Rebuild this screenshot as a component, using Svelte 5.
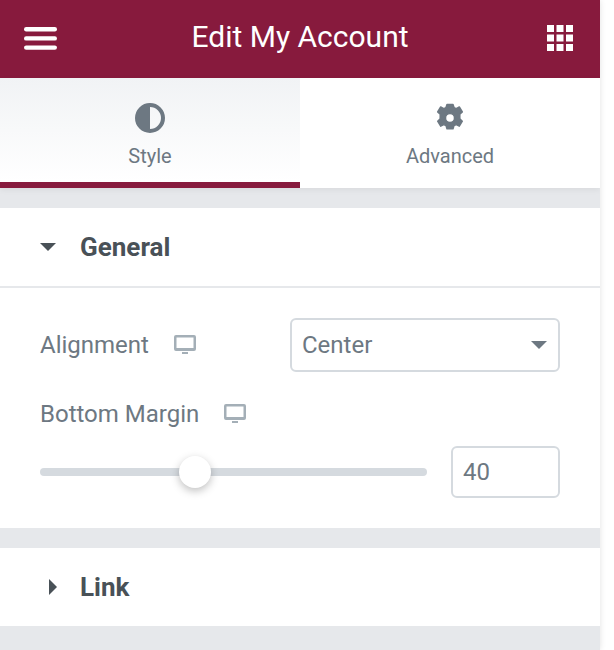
<script>
  const tabs = [
    { id: 'style', label: 'Style' },
    { id: 'advanced', label: 'Advanced' }
  ];
  let active = 'style';
</script>

<div class="panel">
  <header class="topbar">
    <svg class="burger" viewBox="0 0 33 23" width="33" height="23" aria-hidden="true">
      <rect x="0" y="0" width="33" height="4.4" rx="2.2" />
      <rect x="0" y="9.2" width="33" height="4.4" rx="2.2" />
      <rect x="0" y="18.4" width="33" height="4.4" rx="2.2" />
    </svg>
    <h1>Edit My Account</h1>
    <svg class="grid" viewBox="0 0 26 26" width="26" height="26" aria-hidden="true">
      {#each [0, 9.5, 19] as y}
        {#each [0, 9.5, 19] as x}
          <rect {x} {y} width="7" height="7" />
        {/each}
      {/each}
    </svg>
  </header>

  <nav class="tabs">
    {#each tabs as tab}
      <div class="tab" class:active={active === tab.id}>
        {#if tab.id === 'style'}
          <svg viewBox="0 0 30 30" width="30" height="30" aria-hidden="true">
            <path fill-rule="evenodd" d="M15 0a15 15 0 1 0 0 30a15 15 0 0 0 0-30zM15 4a11 11 0 0 1 0 22z" />
          </svg>
        {:else}
          <svg class="gear" viewBox="0 0 30 30" width="30" height="30" aria-hidden="true">
            <path fill-rule="evenodd" d="M12 1.500h6l1 3.100 2.300 1 3-1.600 3 5-2.500 2.300v3.400v1.200l2.500 2.300-3 5-3-1.600-2.300 1-1 3.100h-6l-1-3.100-2.300-1-3 1.600-3-5 2.500-2.300v-4.600l-2.500-2.300 3-5 3 1.600 2.300-1zM15 10.500a4.500 4.500 0 1 0 0 9a4.500 4.500 0 0 0 0-9z" />
          </svg>
        {/if}
        <span>{tab.label}</span>
      </div>
    {/each}
  </nav>

  <section class="section first">
    <div class="section-head open">
      <span class="caret-down"></span>
      <h2>General</h2>
    </div>
    <div class="section-body">
      <div class="row">
        <div class="label">
          <span>Alignment</span>
          <svg class="device" viewBox="0 0 22 20" width="22" height="20" aria-hidden="true">
            <path fill-rule="evenodd" d="M2 0h18a2 2 0 0 1 2 2v12a2 2 0 0 1-2 2h-18a2 2 0 0 1-2-2v-12a2 2 0 0 1 2-2zM2.500 2.500v10.500h17v-10.500zM8 17h6v2h-6z" />
          </svg>
        </div>
        <div class="select">
          <span>Center</span>
          <span class="select-caret"></span>
        </div>
      </div>
      <div class="label margin-label">
        <span>Bottom Margin</span>
        <svg class="device" viewBox="0 0 22 20" width="22" height="20" aria-hidden="true">
          <path fill-rule="evenodd" d="M2 0h18a2 2 0 0 1 2 2v12a2 2 0 0 1-2 2h-18a2 2 0 0 1-2-2v-12a2 2 0 0 1 2-2zM2.500 2.500v10.500h17v-10.500zM8 17h6v2h-6z" />
        </svg>
      </div>
      <div class="slider-row">
        <div class="track">
          <div class="thumb"></div>
        </div>
        <div class="number">40</div>
      </div>
    </div>
  </section>

  <section class="section">
    <div class="section-head closed">
      <span class="caret-right"></span>
      <h2>Link</h2>
    </div>
  </section>
</div>

<style>
  :global(body) {
    background: #fff;
  }

  .panel {
    width: 600px;
    height: 650px;
    background: #e6e8eb;
    font-family: Roboto, "Liberation Sans", sans-serif;
    box-shadow: 0 0 6px rgba(0, 0, 0, 0.12);
    overflow: hidden;
  }

  .topbar {
    height: 78px;
    background: #871a3d;
    display: flex;
    align-items: center;
    justify-content: space-between;
    padding: 0 27px 0 24px;
    color: #fff;
  }

  .topbar h1 {
    margin: 0;
    font-size: 30px;
    font-weight: 400;
    line-height: 1;
    position: relative;
    top: -2px;
    left: -2px;
  }

  .burger {
    fill: #fff;
    margin-bottom: 2px;
  }

  .grid {
    fill: #fff;
    margin-bottom: 2px;
  }

  .tabs {
    display: flex;
    height: 110px;
    box-shadow: 0 2px 6px rgba(0, 0, 0, 0.06);
    position: relative;
  }

  .tab {
    flex: 1;
    display: flex;
    flex-direction: column;
    align-items: center;
    padding-top: 25px;
    background: #fff;
    color: #6d7882;
    box-sizing: border-box;
  }

  .tab svg {
    fill: #6d7882;
    display: block;
  }

  .tab svg.gear {
    stroke: #6d7882;
    stroke-width: 1.500;
    stroke-linejoin: round;
  }

  .tab span {
    font-size: 20px;
    line-height: 24px;
    margin-top: 11px;
  }

  .tab.active {
    background: linear-gradient(180deg, #f1f3f5, #fff);
    border-bottom: 6px solid #871a3d;
  }

  .section {
    background: #fff;
    margin-top: 20px;
  }

  .section-head {
    display: flex;
    align-items: center;
    color: #495157;
  }

  .section-head.open {
    height: 78px;
    border-bottom: 2px solid #e6e8eb;
  }

  .section-head.closed {
    height: 78px;
  }

  .section-head h2 {
    margin: 0;
    font-size: 26px;
    font-weight: 700;
    line-height: 1;
  }

  .caret-down {
    width: 0;
    height: 0;
    border-left: 8px solid transparent;
    border-right: 8px solid transparent;
    border-top: 8px solid #495157;
    margin: 0 24px 0 40px;
  }

  .caret-right {
    width: 0;
    height: 0;
    border-top: 8px solid transparent;
    border-bottom: 8px solid transparent;
    border-left: 8px solid #495157;
    margin: 0 23px 0 49px;
  }

  .section-body {
    padding: 30px 40px 0;
    color: #6d7882;
    height: 210px;
  }

  .row {
    display: flex;
    align-items: center;
    justify-content: space-between;
  }

  .label {
    display: flex;
    align-items: center;
    font-size: 24px;
    line-height: 28px;
  }

  .device {
    fill: #a4afb7;
    margin-left: 25px;
  }

  .select {
    width: 270px;
    height: 54px;
    border: 2px solid #d5dadf;
    border-radius: 6px;
    box-sizing: border-box;
    display: flex;
    align-items: center;
    justify-content: space-between;
    padding: 0 11px 0 10px;
    font-size: 24px;
  }

  .select-caret {
    width: 0;
    height: 0;
    border-left: 8px solid transparent;
    border-right: 8px solid transparent;
    border-top: 8px solid #6d7882;
  }

  .margin-label {
    margin-top: 28px;
  }

  .slider-row {
    display: flex;
    align-items: center;
    justify-content: space-between;
    margin-top: 18px;
  }

  .track {
    width: 387px;
    height: 8px;
    border-radius: 4px;
    background: #d5dadf;
    position: relative;
  }

  .thumb {
    position: absolute;
    left: 139px;
    top: -12px;
    width: 32px;
    height: 32px;
    border-radius: 50%;
    background: #fff;
    box-shadow: 0 3px 8px rgba(0, 0, 0, 0.25);
  }

  .number {
    width: 109px;
    height: 52px;
    border: 2px solid #d5dadf;
    border-radius: 6px;
    box-sizing: border-box;
    display: flex;
    align-items: center;
    padding-left: 10px;
    font-size: 24px;
  }
</style>
